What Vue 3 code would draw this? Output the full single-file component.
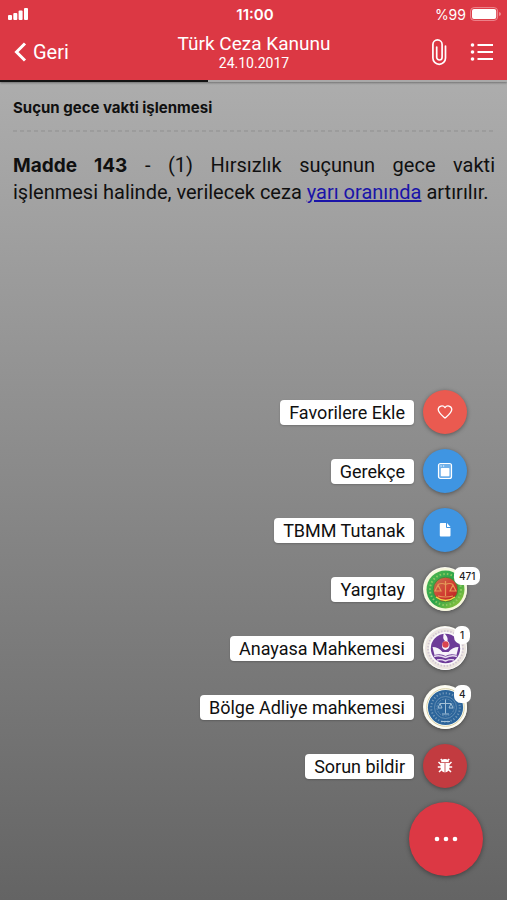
<script setup>
const actions = [
  { label: 'Favorilere Ekle', icon: 'heart', tone: 'coral' },
  { label: 'Gerekçe', icon: 'window', tone: 'blue' },
  { label: 'TBMM Tutanak', icon: 'file', tone: 'blue' },
  { label: 'Yargıtay', icon: 'yargitay', tone: 'seal', badge: '471' },
  { label: 'Anayasa Mahkemesi', icon: 'anayasa', tone: 'seal', badge: '1' },
  { label: 'Bölge Adliye mahkemesi', icon: 'bolge', tone: 'seal', badge: '4' },
  { label: 'Sorun bildir', icon: 'bug', tone: 'brick' },
]
</script>

<template>
  <div class="screen">
    <header class="top">
      <div class="status">
        <svg class="signal" width="22" height="14" viewBox="0 0 22 14" fill="#fff" aria-hidden="true">
          <rect x="0" y="8" width="4" height="5" rx="1" />
          <rect x="5.3" y="6" width="4" height="7" rx="1" />
          <rect x="10.6" y="3.5" width="4" height="9.500" rx="1" />
          <rect x="16" y="1" width="4" height="12" rx="1" />
        </svg>
        <span class="clock">11:00</span>
        <span class="power">
          <span>%99</span>
          <svg width="32" height="14" viewBox="0 0 32 14" aria-hidden="true">
            <rect x="0.6" y="0.6" width="27" height="12.800" rx="3.500" fill="none" stroke="#ee8a92" stroke-width="1" />
            <rect x="2" y="2" width="24.200" height="10" rx="2" fill="#fff" />
            <path d="M29 5v4q2-.6 2-2t-2-2z" fill="#ee8a92" />
          </svg>
        </span>
      </div>
      <nav class="bar">
        <button class="back" type="button">
          <svg width="13" height="22" viewBox="0 0 13 22" aria-hidden="true">
            <path d="M11 2.500 2.500 11l8.500 8.500" fill="none" stroke="#fff" stroke-width="3" />
          </svg>
          <span>Geri</span>
        </button>
        <div class="heading">
          <h1>Türk Ceza Kanunu</h1>
          <p>24.10.2017</p>
        </div>
        <div class="tools">
          <button type="button" aria-label="Ekler">
            <svg width="18" height="28" viewBox="0 0 18 28" fill="none" stroke="#fff" stroke-width="1.700" stroke-linecap="round" aria-hidden="true">
              <path d="M15.500 8v12a6.300 6.300 0 0 1-12.600 0V6.500a4.600 4.600 0 0 1 9.200 0v12.800a2.700 2.700 0 0 1-5.400 0V9" />
            </svg>
          </button>
          <button type="button" aria-label="İçindekiler">
            <svg width="24" height="20" viewBox="0 0 24 20" aria-hidden="true">
              <g fill="#fff"><circle cx="2.500" cy="3" r="1.800" /><circle cx="2.500" cy="10" r="1.800" /><circle cx="2.500" cy="17" r="1.800" /></g>
              <path d="M7.500 3H23M7.500 10H23M7.500 17H23" stroke="#fff" stroke-width="2" />
            </svg>
          </button>
        </div>
      </nav>
      <div class="progress"><span></span></div>
    </header>

    <main class="article">
      <h2>Suçun gece vakti işlenmesi</h2>
      <svg class="rule" width="100%" height="2" aria-hidden="true">
        <line x1="0" y1="1" x2="100%" y2="1" stroke="#8f8f8f" stroke-width="1" stroke-dasharray="4 3" />
      </svg>
      <p class="text"><b>Madde 143</b> - (1) Hırsızlık suçunun gece vakti işlenmesi&nbsp;halinde, verilecek ceza <a href="#yari-oraninda">yarı oranında</a> artırılır.</p>
    </main>

    <div class="menu">
      <ul>
        <li v-for="a in actions" :key="a.label">
          <button class="action" type="button">
            <span class="label">{{ a.label }}</span>
            <span class="disc" :class="a.tone">
              <svg v-if="a.icon === 'heart'" width="16" height="16" viewBox="0 0 16 16" fill="none" stroke="#fff" stroke-width="1.300" stroke-linejoin="round">
                <path d="M8 14C5.300 11.700 1.200 8.800 1.200 5.300A3.700 3.700 0 0 1 8 3.600a3.700 3.700 0 0 1 6.800 1.700C14.800 8.800 10.700 11.700 8 14z" />
              </svg>
              <svg v-else-if="a.icon === 'window'" width="16" height="18" viewBox="0 0 16 18">
                <rect x="1.500" y="1.500" width="13" height="15" rx="2" fill="#72b2ea" stroke="#fff" stroke-width="1.200" />
                <path d="M3.500 4h1.200M6 4h1.200" stroke="#fff" />
                <rect x="3.800" y="6" width="8.600" height="8.200" rx=".8" fill="#fff" />
              </svg>
              <svg v-else-if="a.icon === 'file'" width="12" height="16" viewBox="0 0 12 16">
                <path d="M1.800 1H7v4q0 1 1 1h3.500v7.500q0 1-1 1H1.800q-1 0-1-1V2q0-1 1-1zM8 1l3.500 4H8z" fill="#fff" />
              </svg>
              <svg v-else-if="a.icon === 'yargitay'" width="43" height="43" viewBox="0 0 43 43">
                <defs>
                  <linearGradient id="leaf" x1="0" y1="0" x2="1" y2="1">
                    <stop offset="0" stop-color="#55b84f" />
                    <stop offset=".5" stop-color="#28a34b" />
                    <stop offset="1" stop-color="#a8c936" />
                  </linearGradient>
                  <linearGradient id="ember" x1="0" y1="0" x2="1" y2="1">
                    <stop offset="0" stop-color="#c97751" />
                    <stop offset=".55" stop-color="#d13d31" />
                    <stop offset="1" stop-color="#b51d20" />
                  </linearGradient>
                </defs>
                <circle cx="21.500" cy="21.500" r="21.500" fill="#f7f8dc" />
                <circle cx="21.500" cy="21.500" r="19" fill="url(#leaf)" />
                <circle cx="21.500" cy="21.500" r="15.500" fill="none" stroke="#8cc95f" stroke-width="2" stroke-dasharray="1.500 2.200" />
                <circle cx="21.500" cy="21.500" r="12.300" fill="url(#ember)" stroke="#458c35" stroke-width="1" />
                <path d="M21.500 13v15M14 16.500q4-2 7.500 0 4-2 7.500 0M14 17l-3 6h6zM29 17l-3 6h6zM14 28q7.500 2 15 0" fill="none" stroke="#e59a58" stroke-width="1.200" />
                <path d="M12 29q9.500 7 19 0" fill="none" stroke="#eadf46" stroke-width="1.500" />
              </svg>
              <svg v-else-if="a.icon === 'anayasa'" width="43" height="43" viewBox="0 0 43 43">
                <circle cx="21.500" cy="21.500" r="21.500" fill="#fbfafb" />
                <circle cx="21.500" cy="21.500" r="18.500" fill="none" stroke="#ece6e0" stroke-width="4" />
                <circle cx="21.500" cy="21.500" r="17.500" fill="none" stroke="#cfc4d3" stroke-width="1.800" stroke-dasharray="1.300 1.800" />
                <circle cx="21.500" cy="21.500" r="14.700" fill="#6d3b98" />
                <path d="M20 6q-2 5 1 8-3 1-3 5 0 3 3.500 4 4-1 4-5 0-3-2-4 1-4-3.500-8z" fill="#f7f3fa" />
                <circle cx="21.500" cy="17.500" r="3.200" fill="#d9444f" />
                <path d="M8.500 20q6 0 10 5h6q4-5 10-5l-2 8q-6-2-11 1-5-3-11-1z" fill="#f7f3fa" />
                <path d="M10 29.500q5-2 11.500 1 6.500-3 11.500-1M13 33q4-1 8.500 1 4.500-2 8.500-1" fill="none" stroke="#e6dbef" stroke-width="1.400" />
              </svg>
              <svg v-else-if="a.icon === 'bolge'" width="43" height="43" viewBox="0 0 43 43">
                <circle cx="21.500" cy="21.500" r="21.500" fill="#fdfcf4" />
                <circle cx="21.500" cy="21.500" r="18.800" fill="none" stroke="#d9d0a4" stroke-width="1" />
                <circle cx="21.500" cy="21.500" r="17.600" fill="#2c659b" />
                <g fill="none" stroke="#7096b8">
                  <circle cx="21.500" cy="21.500" r="14.300" stroke-width="2" stroke-dasharray="1.200 2" />
                  <circle cx="21.500" cy="21.500" r="11" stroke-width=".8" />
                  <circle cx="21.500" cy="21.500" r="8.500" stroke-width=".8" stroke-dasharray="2 1" />
                  <path d="M21.500 13.500v14M16 17.500h11M16 17.500l-2 4.500h4zM27 17.500 25 22h4zM18 28h7M17 35.500h9" stroke="#a3c0d6" stroke-width="1" />
                </g>
              </svg>
              <svg v-else width="16" height="16" viewBox="0 0 16 16">
                <path d="M4 4.300Q4.300 1 8 1t4 3.300z" fill="#fff" />
                <path d="M3.500 5h4.100v9.500Q3.500 13.500 3.500 9zM8.400 5h4.100v4q0 4.500-4.100 5.500z" fill="#fff" />
                <path d="M4 6.500 1.500 4M12 6.500 14.500 4M4 9H.8M12 9h3.200M4.500 11.500 2 14M11.500 11.500 14 14M5 2.500 3.800 1M11 2.500 12.200 1" stroke="#fff" stroke-width="1.500" />
              </svg>
              <span v-if="a.badge" class="badge">{{ a.badge }}</span>
            </span>
          </button>
        </li>
      </ul>
      <button class="fab" type="button" aria-label="Menü">
        <svg width="24" height="6" viewBox="0 0 24 6" fill="#fff" aria-hidden="true">
          <circle cx="3" cy="3" r="2.300" /><circle cx="12" cy="3" r="2.300" /><circle cx="21" cy="3" r="2.300" />
        </svg>
      </button>
    </div>
  </div>
</template>

<style>
body {
  background: #666;
}
</style>

<style scoped>
.screen {
  min-height: 100vh;
  display: flex;
  flex-direction: column;
  background: linear-gradient(#b4b4b4, #646464);
  color: #101010;
  font-family: Roboto, "Liberation Sans", sans-serif;
}
button {
  border: 0;
  padding: 0;
  background: none;
  color: inherit;
  font: inherit;
  display: flex;
  align-items: center;
}
h1, h2, p, ul {
  margin: 0;
  padding: 0;
  font-weight: 400;
}
.top {
  background: #dc3844;
  color: #fff;
  box-shadow: 0 1px 2px rgba(0, 0, 0, 0.35);
}
.status {
  display: grid;
  grid-template-columns: 1fr auto 1fr;
  align-items: center;
  height: 28px;
  padding: 0 5px 0 8px;
  font-family: Inter, "Liberation Sans", sans-serif;
}
.clock {
  font-size: 15px;
  font-weight: 600;
}
.power {
  display: flex;
  align-items: center;
  justify-content: flex-end;
  gap: 4px;
  font-size: 14px;
}
.bar {
  display: grid;
  grid-template-columns: 1fr auto 1fr;
  align-items: center;
  height: 47px;
  padding: 0 13px 5px 14px;
}
.back {
  gap: 6px;
  font-size: 20px;
  justify-self: start;
}
.heading {
  text-align: center;
}
.heading h1 {
  font-size: 19px;
  line-height: 22px;
}
.heading p {
  font-size: 14px;
  line-height: 16px;
}
.tools {
  display: flex;
  align-items: center;
  justify-content: flex-end;
  gap: 22px;
}
.progress {
  height: 2px;
  background: #a9a9a9;
}
.progress span {
  display: block;
  width: 41%;
  height: 100%;
  background: #141414;
}
.article {
  padding: 16px 12px 0 13px;
}
.article h2 {
  font-family: Inter, "Liberation Sans", sans-serif;
  font-size: 15px;
  line-height: 20px;
  font-weight: 700;
}
.rule {
  display: block;
  margin-top: 12px;
}
.text {
  margin-top: 20px;
  font-size: 20px;
  line-height: 27px;
  text-align: justify;
}
.text b {
  font-family: Inter, "Liberation Sans", sans-serif;
  font-size: 19px;
  line-height: 20px;
}
.text a {
  color: #1a14a8;
}
.menu {
  margin-top: auto;
  padding: 0 24px 24px 0;
  display: flex;
  flex-direction: column;
  align-items: flex-end;
  gap: 14px;
}
.menu ul {
  list-style: none;
  display: flex;
  flex-direction: column;
  align-items: flex-end;
  gap: 15px;
  padding-right: 16px;
}
.action {
  gap: 9px;
}
.label {
  padding: 0 9px;
  border-radius: 4px;
  background: #fff;
  font-size: 18px;
  line-height: 25px;
  box-shadow: 0 1px 2px rgba(0, 0, 0, 0.2);
}
.disc {
  position: relative;
  width: 44px;
  height: 44px;
  border-radius: 50%;
  display: flex;
  align-items: center;
  justify-content: center;
  box-shadow: 0 1px 4px rgba(0, 0, 0, 0.4);
}
.coral {
  background: #ea5a50;
}
.blue {
  background: #3f95e2;
}
.brick {
  background: #c23b40;
}
.seal {
  background: #fbfaf0;
}
.badge {
  position: absolute;
  left: 31px;
  top: 0;
  padding: 0 5px;
  min-width: 6px;
  border-radius: 7px;
  background: #fff;
  color: #222;
  font-family: Inter, "Liberation Sans", sans-serif;
  font-size: 10px;
  font-weight: 500;
  line-height: 18px;
  text-align: center;
}
.fab {
  width: 74px;
  height: 74px;
  border-radius: 50%;
  justify-content: center;
  background: #dc3844;
  box-shadow: 0 1px 5px rgba(0, 0, 0, 0.4);
}
</style>
